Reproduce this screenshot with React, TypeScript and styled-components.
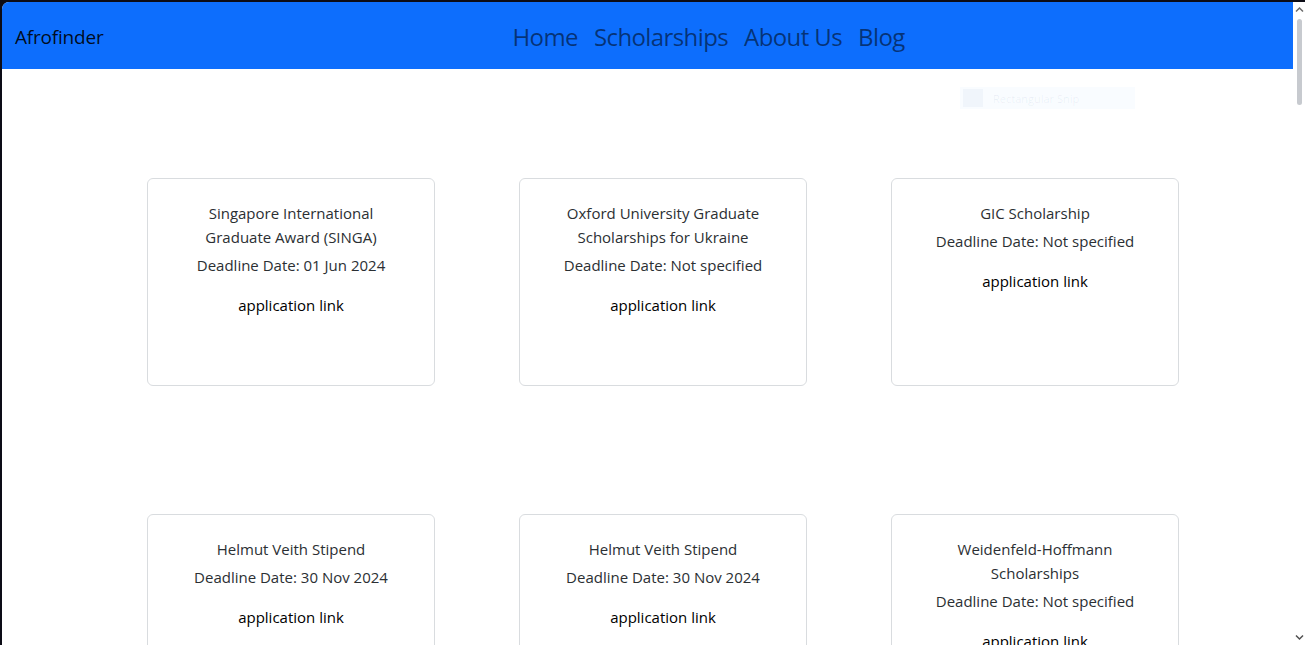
import React from "react";
import styled, { createGlobalStyle } from "styled-components";

const GlobalStyle = createGlobalStyle`
  html, body { margin: 0; padding: 0; background: #0c0c16; }
  body { font-family: "Open Sans", "Noto Sans", sans-serif; overflow: hidden; }
  * { box-sizing: border-box; }
`;

const Frame = styled.div`
  width: 1305px;
  height: 645px;
  overflow: hidden;
  background: #0c0c16;
  padding: 2px 0 0 2px;
  display: flex;
`;

const Viewport = styled.div`
  flex: 1;
  display: flex;
  background: #ffffff;
  border-top-left-radius: 7px;
  overflow: hidden;
`;

const Main = styled.div`
  flex: 1;
  position: relative;
  display: flex;
  flex-direction: column;
`;

const Navbar = styled.nav`
  flex: none;
  height: 67px;
  background: #0d6efd;
  display: flex;
  align-items: center;
  padding: 3px 0 0 13px;
`;

const Brand = styled.a`
  font-size: 19px;
  color: rgba(0, 0, 0, 0.9);
  text-decoration: none;
  letter-spacing: -0.2px;
`;

const NavList = styled.ul`
  list-style: none;
  display: flex;
  margin: -2px 0 0 401px;
  padding: 0;
`;

const NavLink = styled.a`
  display: block;
  padding: 0 8px;
  font-size: 24px;
  letter-spacing: -0.6px;
  color: rgba(0, 0, 0, 0.55);
  text-decoration: none;
`;

const Ghost = styled.div`
  position: absolute;
  left: 958px;
  top: 85px;
  width: 175px;
  height: 22px;
  background: rgba(13, 110, 253, 0.025);
  display: flex;
  align-items: center;
  gap: 10px;
  padding-left: 3px;
  font-size: 11px;
  color: rgba(13, 60, 140, 0.07);
`;

const GhostIcon = styled.span`
  width: 20px;
  height: 18px;
  background: rgba(13, 60, 140, 0.035);
`;

const Grid = styled.div`
  flex: none;
  display: grid;
  grid-template-columns: repeat(3, 288px);
  column-gap: 84px;
  row-gap: 128px;
  padding: 109px 0 0 145px;
`;

const Card = styled.div`
  height: 208px;
  border: 1px solid #d9dcdf;
  border-radius: 6px;
  padding: 22px 16px 16px;
  display: flex;
  flex-direction: column;
  align-items: center;
  text-align: center;
`;

const Title = styled.div`
  font-size: 15px;
  line-height: 24px;
  color: #2b2f33;
  max-width: 200px;
`;

const Deadline = styled.div`
  margin-top: 4px;
  font-size: 15px;
  line-height: 24px;
  color: #2b2f33;
`;

const AppLink = styled.a`
  margin-top: 16px;
  font-size: 15px;
  line-height: 24px;
  color: #000;
  text-decoration: none;
`;

const Scrollbar = styled.div`
  width: 12px;
  background: #fff;
  display: flex;
  flex-direction: column;
  align-items: center;
  padding-top: 4px;
`;

const Arrow = styled.svg`
  width: 9px;
  height: 7px;
  flex: none;
`;

const Thumb = styled.div`
  margin-top: 6px;
  width: 5px;
  height: 86px;
  border-radius: 3px;
  background: #c7cacf;
`;

const Spacer = styled.div`
  flex: 1;
`;

const cards = [
  { title: "Singapore International Graduate Award (SINGA)", deadline: "01 Jun 2024" },
  { title: "Oxford University Graduate Scholarships for Ukraine", deadline: "Not specified" },
  { title: "GIC Scholarship", deadline: "Not specified" },
  { title: "Helmut Veith Stipend", deadline: "30 Nov 2024" },
  { title: "Helmut Veith Stipend", deadline: "30 Nov 2024" },
  { title: "Weidenfeld-Hoffmann Scholarships", deadline: "Not specified" },
];

export default function App() {
  return (
    <>
      <GlobalStyle />
      <Frame>
        <Viewport>
          <Main>
            <Navbar>
              <Brand href="#">Afrofinder</Brand>
              <NavList>
                <li><NavLink href="#">Home</NavLink></li>
                <li><NavLink href="#">Scholarships</NavLink></li>
                <li><NavLink href="#">About Us</NavLink></li>
                <li><NavLink href="#">Blog</NavLink></li>
              </NavList>
            </Navbar>
            <Ghost>
              <GhostIcon />
              Rectangular Snip
            </Ghost>
            <Grid>
              {cards.map((c, i) => (
                <Card key={i}>
                  <Title>{c.title}</Title>
                  <Deadline>Deadline Date: {c.deadline}</Deadline>
                  <AppLink href="#">application link</AppLink>
                </Card>
              ))}
            </Grid>
          </Main>
          <Scrollbar>
            <Arrow viewBox="0 0 9 7">
              <path d="M1 5.5 L4.5 2 L8 5.5" fill="none" stroke="#6b6b6b" strokeWidth="1.5" />
            </Arrow>
            <Thumb />
            <Spacer />
            <Arrow viewBox="0 0 9 7" style={{ marginBottom: 4 }}>
              <path d="M1 1.5 L4.5 5 L8 1.5" fill="none" stroke="#505050" strokeWidth="1.5" />
            </Arrow>
          </Scrollbar>
        </Viewport>
      </Frame>
    </>
  );
}
